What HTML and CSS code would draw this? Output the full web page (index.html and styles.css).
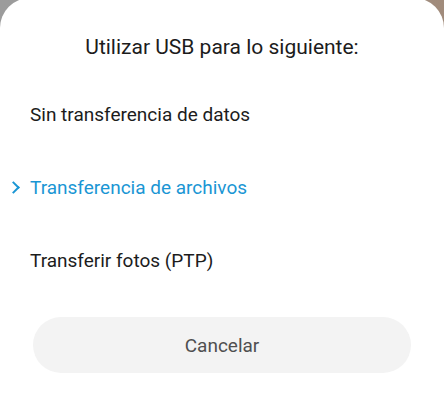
FILE: index.html
```html
<!DOCTYPE html>
<html lang="es">
<head>
    <meta charset="UTF-8">
    <meta name="viewport" content="width=device-width, initial-scale=1.0">
    <title>Utilizar USB</title>
    <link rel="stylesheet" href="styles.css">
</head>
<body>
    <div class="sheet">
        <h1 class="title">Utilizar USB para lo siguiente:</h1>
        <ul class="options">
            <li class="option">Sin transferencia de datos</li>
            <li class="option selected">Transferencia de archivos</li>
            <li class="option">Transferir fotos (PTP)</li>
        </ul>
        <button type="button" class="cancel">Cancelar</button>
    </div>
</body>
</html>
```

FILE: styles.css
```css
html, body {
    margin: 0;
    height: 100%;
}
body {
    font-family: Roboto, "Noto Sans", Arial, sans-serif;
    background: linear-gradient(90deg, #9c9c9c 0%, #9a9a9a 50%, #a18b7b 100%);
    overflow: hidden;
}
.sheet {
    background: #fff;
    margin-top: -2px;
    height: 402px;
    border-radius: 30px 30px 0 0;
    padding-top: 34px;
    box-sizing: border-box;
}
.title {
    margin: 0;
    font-size: 21px;
    font-weight: 400;
    color: #1c1c1c;
    text-align: center;
    line-height: 30px;
}
.options {
    list-style: none;
    margin: 38px 0 0;
    padding: 0;
}
.option {
    position: relative;
    padding-left: 30px;
    font-size: 19px;
    line-height: 30px;
    color: #1c1c1c;
    margin-bottom: 43px;
}
.option:last-child {
    margin-bottom: 41px;
}
.option.selected {
    color: #1a96d4;
}
/* chevron for the current choice */
.option.selected::before {
    content: "";
    position: absolute;
    left: 9px;
    top: 10px;
    width: 7px;
    height: 7px;
    border-top: 2px solid #1a96d4;
    border-right: 2px solid #1a96d4;
    transform: rotate(45deg);
}
.cancel {
    display: block;
    width: 378px;
    height: 56px;
    margin: 0 auto;
    border: none;
    border-radius: 28px;
    background: #f3f3f3;
    font-family: inherit;
    font-size: 19px;
    color: #4f4f4f;
}
```
